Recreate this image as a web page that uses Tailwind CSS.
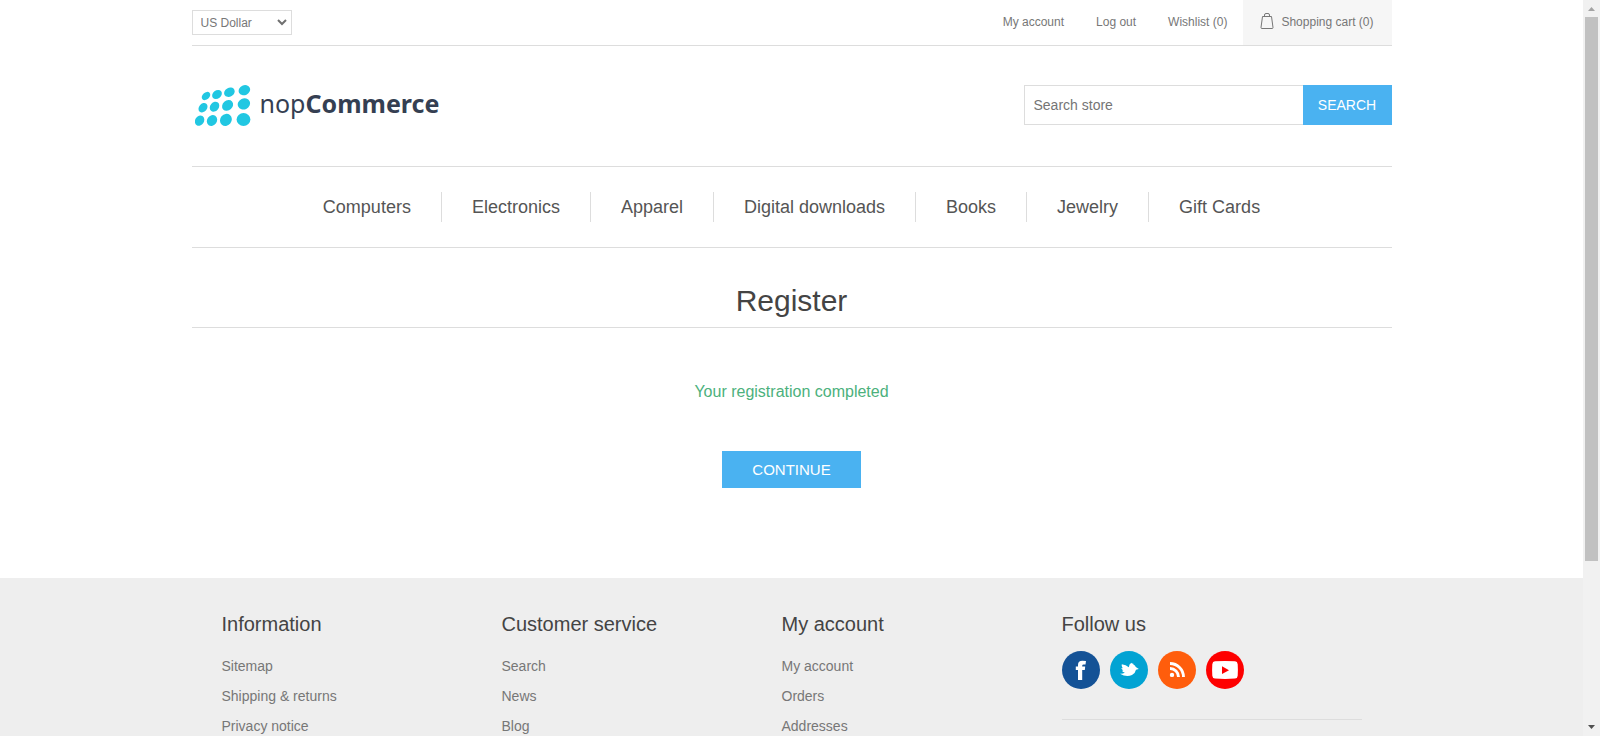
<!DOCTYPE html>
<html lang="en">
<head>
<meta charset="utf-8">
<meta name="viewport" content="width=device-width, initial-scale=1">
<title>nopCommerce - Register</title>
<script src="https://cdn.jsdelivr.net/npm/@tailwindcss/browser@4"></script>
</head>
<body class="flex h-screen overflow-hidden bg-white font-['Liberation_Sans',Arial,sans-serif] text-sm text-[#777]">
<div class="min-w-0 flex-1 overflow-hidden">
  <header class="mx-auto max-w-[1200px]">
    <div class="flex h-[46px] items-start justify-between border-b border-[#ddd] text-xs">
      <div class="relative mt-[10px]">
        <select aria-label="Currency" class="h-[25px] w-[100px] appearance-none border border-[#ddd] bg-white pl-2 text-xs text-[#777]">
          <option>US Dollar</option>
          <option>Euro</option>
        </select>
        <svg class="pointer-events-none absolute top-[9px] right-[5px] h-[7px] w-[10px]" viewBox="0 0 10 7" fill="none" stroke="#707070" stroke-width="2"><path d="M1 1l4 4 4-4"/></svg>
      </div>
      <nav aria-label="Account" class="flex h-full leading-[44px]">
        <a href="#" class="mr-8">My account</a>
        <a href="#" class="mr-8">Log out</a>
        <a href="#" class="mr-4">Wishlist (0)</a>
        <a href="#" class="flex items-start bg-[#f6f6f6] pr-[18px] pl-[17px]">
          <svg class="mt-3 mr-[7px] h-[18px] w-[14px]" viewBox="0 0 14 18" fill="none" stroke="#777" stroke-linejoin="round"><path d="M2.500 4.500h9L13 15.500q.1 1-1 1H2q-1.100 0-1-1zM4.500 4.500V3q0-1.500 1.500-1.500h2Q9.500 1.500 9.500 3v1.500"/></svg>
          Shopping cart (0)
        </a>
      </nav>
    </div>
    <div class="flex h-[121px] items-start justify-between border-b border-[#ddd] pt-[39px]">
      <a href="#" class="flex items-center pl-[3px] text-[25px] leading-8 text-[#353f52]" aria-label="nopCommerce">
        <svg class="h-[42px] w-[56px]" viewBox="0 0 56 42" fill="#21c7e2">
          <ellipse cx="11" cy="11" rx="4.800" ry="3.500" transform="rotate(-42 11 11)"/>
          <ellipse cx="22" cy="9.500" rx="5.300" ry="4.100" transform="rotate(-38 22 9.500)"/>
          <ellipse cx="34.400" cy="7.200" rx="5.600" ry="4.400" transform="rotate(-30 34.400 7.200)"/>
          <ellipse cx="49.400" cy="5.200" rx="5.900" ry="4.900" transform="rotate(-25 49.400 5.200)"/>
          <ellipse cx="8" cy="22.700" rx="5.200" ry="4" transform="rotate(-50 8 22.700)"/>
          <ellipse cx="19.500" cy="21.700" rx="5.400" ry="4.300" transform="rotate(-50 19.500 21.700)"/>
          <ellipse cx="32.600" cy="20.400" rx="6" ry="4.900" transform="rotate(-42 32.600 20.400)"/>
          <ellipse cx="48.900" cy="18.900" rx="6.300" ry="5.500" transform="rotate(-25 48.900 18.900)"/>
          <ellipse cx="4.600" cy="35.700" rx="5.400" ry="4.400" transform="rotate(-58 4.600 35.700)"/>
          <ellipse cx="17" cy="35.500" rx="5.700" ry="4.900" transform="rotate(-55 17 35.500)"/>
          <ellipse cx="30.900" cy="34.900" rx="6.300" ry="5.700" transform="rotate(-50 30.900 34.900)"/>
          <ellipse cx="48.500" cy="34.500" rx="6.900" ry="6.500"/>
        </svg>
        <span class="ml-[9px] pb-1.5 font-['Noto_Sans','Open_Sans',sans-serif]">nop<b>Commerce</b></span>
      </a>
      <form class="flex" onsubmit="return false">
        <input type="text" aria-label="Search store" placeholder="Search store" class="h-10 w-[279px] border border-r-0 border-[#ddd] px-[9px] pb-px text-sm text-[#777] placeholder:text-[#757575]">
        <button class="h-10 w-[89px] bg-[#4ab2f1] text-sm text-white">SEARCH</button>
      </form>
    </div>
    <nav aria-label="Categories" class="flex h-[81px] items-center justify-center divide-x divide-[#ddd] border-b border-[#ddd] text-lg leading-[30px] text-[#555]">
      <a href="#" class="px-[30px]">Computers</a>
      <a href="#" class="px-[30px]">Electronics</a>
      <a href="#" class="px-[30px]">Apparel</a>
      <a href="#" class="px-[30px]">Digital downloads</a>
      <a href="#" class="px-[30px]">Books</a>
      <a href="#" class="px-[30px]">Jewelry</a>
      <a href="#" class="px-[30px]">Gift Cards</a>
    </nav>
  </header>
  <main class="mx-auto max-w-[1200px] pb-[90px] text-center">
    <h1 class="border-b border-[#ddd] pt-[31px] pb-1 text-[30px] leading-[44px] text-[#444]">Register</h1>
    <p class="mt-[54px] text-base leading-5 text-[#4cb17c]">Your registration completed</p>
    <a href="#" class="mt-[49px] inline-block bg-[#4ab2f1] px-[30px] text-[15px] leading-[37px] text-white">CONTINUE</a>
  </main>
  <footer class="bg-[#eee]">
    <div class="mx-auto flex max-w-[1200px] px-[30px] pt-[30px]">
      <section class="w-[280px]">
        <h2 class="text-xl leading-8 text-[#444]">Information</h2>
        <ul class="mt-[11px] leading-[30px]">
          <li><a href="#">Sitemap</a></li>
          <li><a href="#">Shipping &amp; returns</a></li>
          <li><a href="#">Privacy notice</a></li>
        </ul>
      </section>
      <section class="w-[280px]">
        <h2 class="text-xl leading-8 text-[#444]">Customer service</h2>
        <ul class="mt-[11px] leading-[30px]">
          <li><a href="#">Search</a></li>
          <li><a href="#">News</a></li>
          <li><a href="#">Blog</a></li>
        </ul>
      </section>
      <section class="w-[280px]">
        <h2 class="text-xl leading-8 text-[#444]">My account</h2>
        <ul class="mt-[11px] leading-[30px]">
          <li><a href="#">My account</a></li>
          <li><a href="#">Orders</a></li>
          <li><a href="#">Addresses</a></li>
        </ul>
      </section>
      <section class="flex-1">
        <h2 class="text-xl leading-8 text-[#444]">Follow us</h2>
        <div class="mt-[11px] flex gap-[10px] border-b border-[#ddd] pb-[30px]">
          <a href="#" aria-label="Facebook"><svg class="size-[38px]" viewBox="0 0 38 38"><circle cx="19" cy="19" r="19" fill="#145296"/><path fill="#fff" d="M16 29V19h-2.200v-3.600H16v-1.400q0-4.200 4.400-4.200 2 0 3.600.3l-.5 3.300h-1.700q-1.600 0-1.600 1.400v.6h3l-.4 3.600h-2.600V29z"/></svg></a>
          <a href="#" aria-label="Twitter"><svg class="size-[38px]" viewBox="0 0 38 38"><circle cx="19" cy="19" r="19" fill="#02a3d3"/><path fill="#fff" d="M11.800 13.300q4.200.6 7 3 .2-3.300 2.600-4.500l.7.900.9-.5.6 1.500q1.500.6 2.200 2.300l3 1.900-2.800.8q-.6 3.300-4 5.300-5.500 2.700-12-1.300 3 .2 4.900-1.200-2.200-.2-3-1.700l1.500-.4q-1.900-.8-2.100-2.300l1.400.1q-1.600-1.600-.9-3.900z"/></svg></a>
          <a href="#" aria-label="RSS"><svg class="size-[38px]" viewBox="0 0 38 38"><circle cx="19" cy="19" r="19" fill="#ff5d0c"/><circle cx="14" cy="23.900" r="2.200" fill="#fff"/><path fill="none" stroke="#fff" stroke-width="2.900" d="M12 17.500a8.500 8.500 0 0 1 8.500 8.500M12 12.500A13.500 13.500 0 0 1 25.500 26"/></svg></a>
          <a href="#" aria-label="YouTube"><svg class="size-[38px]" viewBox="0 0 38 38"><circle cx="19" cy="19" r="19" fill="#fe0000"/><path fill="#fff" d="M9 10.300q10-.6 20 0 2.500.2 2.700 3 .4 5.700 0 11.400-.2 2.700-2.700 2.900-10 .7-20 0-2.500-.2-2.700-2.900-.4-5.700 0-11.400.2-2.800 2.700-3z"/><path fill="#fe0000" d="M16 15.300v7.800l7-3.900z"/></svg></a>
        </div>
      </section>
    </div>
  </footer>
</div>
<!-- Page scrollbar -->
<div aria-hidden="true" class="flex w-[17px] shrink-0 flex-col items-center bg-[#f1f1f1]">
  <svg class="size-[17px] shrink-0" viewBox="0 0 17 17" fill="#a3a3a3"><path d="M8.500 7L12 11H5z"/></svg>
  <div class="min-h-0 w-[13px] flex-[544] bg-[#c1c1c1]"></div>
  <div class="flex-[158]"></div>
  <svg class="size-[17px] shrink-0" viewBox="0 0 17 17" fill="#505050"><path d="M5 6h7l-3.500 4z"/></svg>
</div>
</body>
</html>
